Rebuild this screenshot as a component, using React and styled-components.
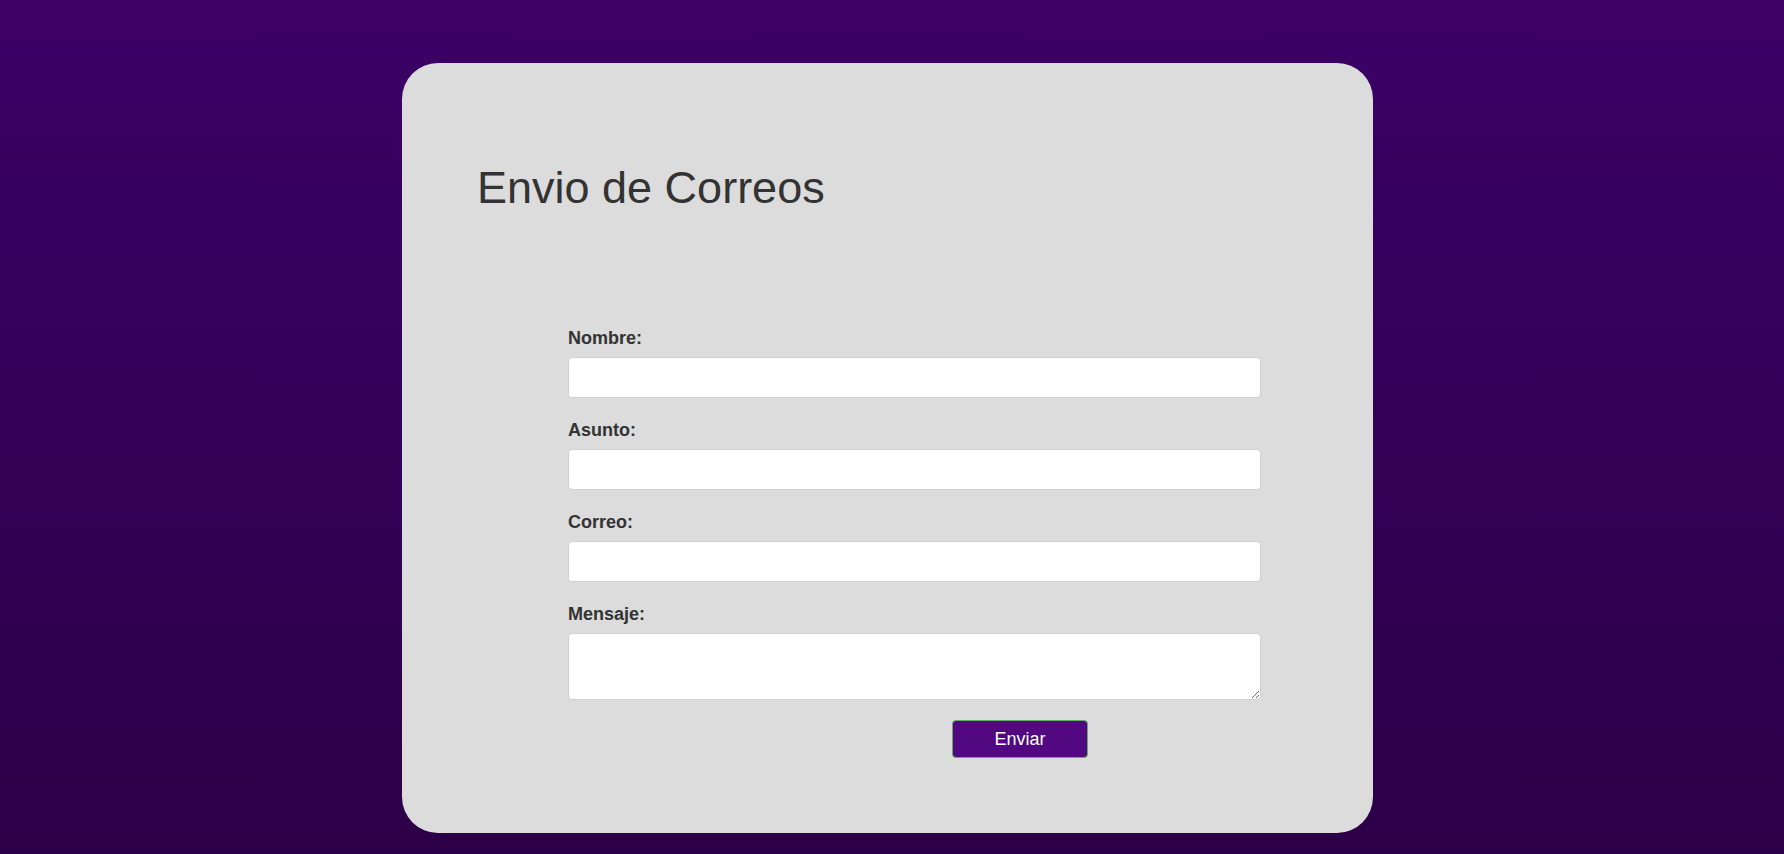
import React from 'react'
import styled, { createGlobalStyle } from 'styled-components'

const GlobalStyle = createGlobalStyle`
    html, body {
        margin: 0;
        padding: 0;
    }
    body {
        font-family: "Liberation Sans", Arial, sans-serif;
        background: #2d0049;
    }
`

const Page = styled.div`
    min-height: 854px;
    box-sizing: border-box;
    padding-top: 63px;
    background: linear-gradient(180deg, #3c0066 0%, #2c0048 100%);
    overflow: hidden;
`

const Card = styled.div`
    width: 971px;
    margin-left: calc(50% - 490px);
    box-sizing: border-box;
    padding: 100px 0 75px 75px;
    background: #dcdcdc;
    border-radius: 36px;
`

const Title = styled.h1`
    margin: 0;
    font-size: 45px;
    line-height: 50px;
    font-weight: normal;
    color: #333;
`

const Form = styled.form`
    display: flex;
    flex-direction: column;
    width: 693px;
    margin: 115px 0 0 91px;
`

const Label = styled.label`
    font-size: 18px;
    line-height: 21px;
    font-weight: bold;
    color: #333;
    margin-bottom: 8px;
`

const Input = styled.input`
    box-sizing: border-box;
    width: 100%;
    height: 41px;
    margin: 0 0 22px;
    padding: 0 10px;
    border: 1px solid #d0d0d0;
    border-radius: 4px;
    background: #fff;
    font: 16px "Liberation Sans", Arial, sans-serif;
    outline: none;
`

const TextArea = styled.textarea`
    box-sizing: border-box;
    width: 100%;
    height: 67px;
    margin: 0;
    padding: 8px 10px;
    border: 1px solid #d0d0d0;
    border-radius: 4px;
    background: #fff;
    font: 16px "Liberation Sans", Arial, sans-serif;
    outline: none;
`

const Button = styled.button`
    align-self: flex-start;
    margin: 20px 0 0 384px;
    width: 136px;
    height: 38px;
    border: 1px solid #5fae6a;
    border-radius: 4px;
    background: #520880;
    color: #fff;
    font: 18px "Liberation Sans", Arial, sans-serif;
    cursor: pointer;
`

const fields = [
    { id: 'nombre', label: 'Nombre:' },
    { id: 'asunto', label: 'Asunto:' },
    { id: 'correo', label: 'Correo:' },
]

export default function App() {
    return (
        <>
            <GlobalStyle />
            <Page>
                <Card>
                    <Title>Envio de Correos</Title>
                    <Form onSubmit={e => e.preventDefault()}>
                        {fields.map(f => (
                            <React.Fragment key={f.id}>
                                <Label htmlFor={f.id}>{f.label}</Label>
                                <Input id={f.id} type="text" />
                            </React.Fragment>
                        ))}
                        <Label htmlFor="mensaje">Mensaje:</Label>
                        <TextArea id="mensaje" />
                        <Button type="submit">Enviar</Button>
                    </Form>
                </Card>
            </Page>
        </>
    )
}
